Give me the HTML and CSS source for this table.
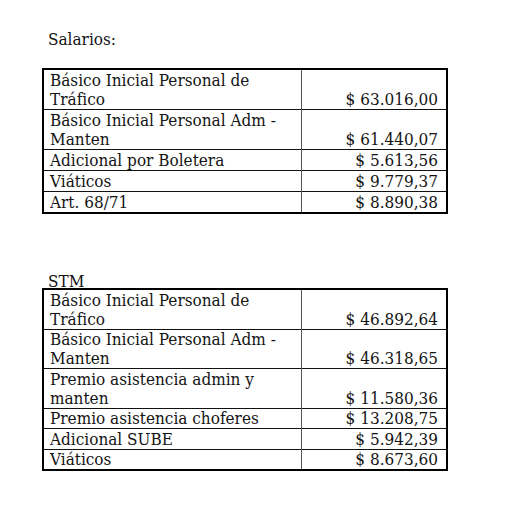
FILE: index.html
```html
<!DOCTYPE html>
<html lang="es">
<head>
<meta charset="utf-8">
<link rel="stylesheet" href="styles.css">
</head>
<body>
<div class="page">
  <p class="caption caption-first">Salarios:</p>
  <table class="sheet">
    <tr><td class="label">Básico Inicial Personal de Tráfico</td><td class="amount">$ 63.016,00</td></tr>
    <tr><td class="label">Básico Inicial Personal Adm - Manten</td><td class="amount">$ 61.440,07</td></tr>
    <tr><td class="label">Adicional por Boletera</td><td class="amount">$ 5.613,56</td></tr>
    <tr><td class="label">Viáticos</td><td class="amount">$ 9.779,37</td></tr>
    <tr><td class="label">Art. 68/71</td><td class="amount">$ 8.890,38</td></tr>
  </table>
  <p class="caption caption-second">STM</p>
  <table class="sheet sheet-tight">
    <tr><td class="label">Básico Inicial Personal de Tráfico</td><td class="amount">$ 46.892,64</td></tr>
    <tr><td class="label">Básico Inicial Personal Adm - Manten</td><td class="amount">$ 46.318,65</td></tr>
    <tr><td class="label">Premio asistencia admin y manten</td><td class="amount">$ 11.580,36</td></tr>
    <tr><td class="label">Premio asistencia choferes</td><td class="amount">$ 13.208,75</td></tr>
    <tr><td class="label">Adicional SUBE</td><td class="amount">$ 5.942,39</td></tr>
    <tr><td class="label">Viáticos</td><td class="amount">$ 8.673,60</td></tr>
  </table>
</div>
</body>
</html>
```
FILE: styles.css
```css
html, body {
  margin: 0;
  padding: 0;
  background: #ffffff;
}
.page {
  padding: 0 0 0 42px;
  font-family: "DejaVu Serif", "Liberation Serif", serif;
  font-stretch: condensed;
  font-size: 17px;
  color: #141414;
}
.caption {
  margin: 0;
  padding-left: 6px;
  line-height: 19px;
}
.caption-first {
  padding-top: 30px;
  margin-bottom: 19px;
}
.caption-second {
  margin-top: 58px;
  margin-bottom: -3px;
}
.sheet {
  border-collapse: collapse;
  width: 406px;
  border: 2px solid #000;
  table-layout: fixed;
}
.sheet td {
  border-top: 1px solid #111;
  padding: 1px 8px 0 6px;
  line-height: 19px;
  vertical-align: bottom;
}
.sheet-tight td {
  padding-top: 0.5px;
}
.sheet .label {
  width: 243px;
  border-right: 1px solid #555;
}
.sheet .amount {
  text-align: right;
}
```
